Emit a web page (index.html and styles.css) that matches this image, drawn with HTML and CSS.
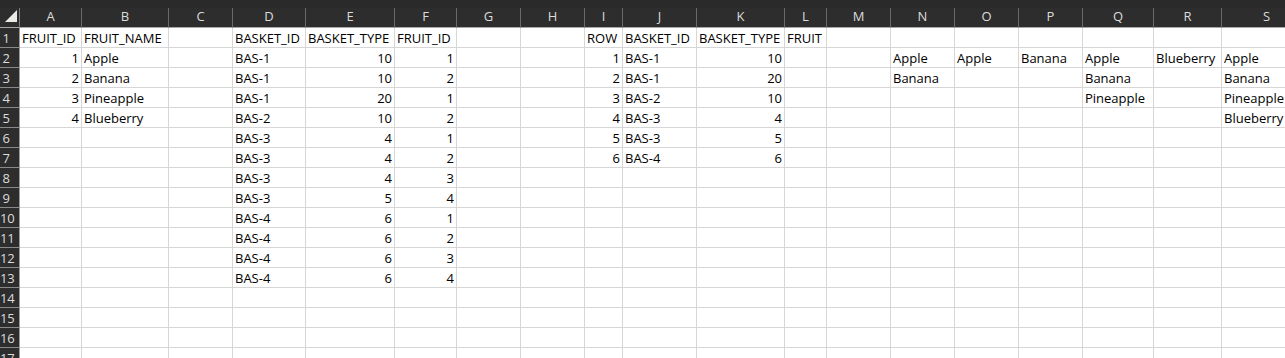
FILE: index.html
```html
<!DOCTYPE html>
<html lang="en">
<head>
<meta charset="utf-8">
<title>Sheet1</title>
<link rel="stylesheet" href="styles.css">
</head>
<body>
<div class="sheet">
  <div class="topstrip"></div>
  <div class="row colhead">
    <div class="corner"><svg width="20" height="19" viewBox="0 0 20 19"><polygon points="5,14 17,14 17,2" fill="#e9ece6"/></svg></div>
    <div class="ch">A</div><div class="ch">B</div><div class="ch">C</div><div class="ch">D</div><div class="ch">E</div><div class="ch">F</div><div class="ch">G</div><div class="ch">H</div><div class="ch">I</div><div class="ch">J</div><div class="ch">K</div><div class="ch">L</div><div class="ch">M</div><div class="ch">N</div><div class="ch">O</div><div class="ch">P</div><div class="ch">Q</div><div class="ch">R</div><div class="ch">S</div>
  </div>
  <div class="row">
    <div class="rh">1</div>
    <div class="c">FRUIT_ID</div><div class="c">FRUIT_NAME</div><div class="c"></div><div class="c">BASKET_ID</div><div class="c">BASKET_TYPE</div><div class="c">FRUIT_ID</div><div class="c"></div><div class="c"></div><div class="c">ROW</div><div class="c">BASKET_ID</div><div class="c">BASKET_TYPE</div><div class="c">FRUIT</div><div class="c"></div><div class="c"></div><div class="c"></div><div class="c"></div><div class="c"></div><div class="c"></div><div class="c"></div>
  </div>
  <div class="row">
    <div class="rh">2</div>
    <div class="c n">1</div><div class="c">Apple</div><div class="c"></div><div class="c">BAS-1</div><div class="c n">10</div><div class="c n">1</div><div class="c"></div><div class="c"></div><div class="c n">1</div><div class="c">BAS-1</div><div class="c n">10</div><div class="c"></div><div class="c"></div><div class="c">Apple</div><div class="c">Apple</div><div class="c">Banana</div><div class="c">Apple</div><div class="c">Blueberry</div><div class="c">Apple</div>
  </div>
  <div class="row">
    <div class="rh">3</div>
    <div class="c n">2</div><div class="c">Banana</div><div class="c"></div><div class="c">BAS-1</div><div class="c n">10</div><div class="c n">2</div><div class="c"></div><div class="c"></div><div class="c n">2</div><div class="c">BAS-1</div><div class="c n">20</div><div class="c"></div><div class="c"></div><div class="c">Banana</div><div class="c"></div><div class="c"></div><div class="c">Banana</div><div class="c"></div><div class="c">Banana</div>
  </div>
  <div class="row">
    <div class="rh">4</div>
    <div class="c n">3</div><div class="c">Pineapple</div><div class="c"></div><div class="c">BAS-1</div><div class="c n">20</div><div class="c n">1</div><div class="c"></div><div class="c"></div><div class="c n">3</div><div class="c">BAS-2</div><div class="c n">10</div><div class="c"></div><div class="c"></div><div class="c"></div><div class="c"></div><div class="c"></div><div class="c">Pineapple</div><div class="c"></div><div class="c">Pineapple</div>
  </div>
  <div class="row">
    <div class="rh">5</div>
    <div class="c n">4</div><div class="c">Blueberry</div><div class="c"></div><div class="c">BAS-2</div><div class="c n">10</div><div class="c n">2</div><div class="c"></div><div class="c"></div><div class="c n">4</div><div class="c">BAS-3</div><div class="c n">4</div><div class="c"></div><div class="c"></div><div class="c"></div><div class="c"></div><div class="c"></div><div class="c"></div><div class="c"></div><div class="c">Blueberry</div>
  </div>
  <div class="row">
    <div class="rh">6</div>
    <div class="c"></div><div class="c"></div><div class="c"></div><div class="c">BAS-3</div><div class="c n">4</div><div class="c n">1</div><div class="c"></div><div class="c"></div><div class="c n">5</div><div class="c">BAS-3</div><div class="c n">5</div><div class="c"></div><div class="c"></div><div class="c"></div><div class="c"></div><div class="c"></div><div class="c"></div><div class="c"></div><div class="c"></div>
  </div>
  <div class="row">
    <div class="rh">7</div>
    <div class="c"></div><div class="c"></div><div class="c"></div><div class="c">BAS-3</div><div class="c n">4</div><div class="c n">2</div><div class="c"></div><div class="c"></div><div class="c n">6</div><div class="c">BAS-4</div><div class="c n">6</div><div class="c"></div><div class="c"></div><div class="c"></div><div class="c"></div><div class="c"></div><div class="c"></div><div class="c"></div><div class="c"></div>
  </div>
  <div class="row">
    <div class="rh">8</div>
    <div class="c"></div><div class="c"></div><div class="c"></div><div class="c">BAS-3</div><div class="c n">4</div><div class="c n">3</div><div class="c"></div><div class="c"></div><div class="c"></div><div class="c"></div><div class="c"></div><div class="c"></div><div class="c"></div><div class="c"></div><div class="c"></div><div class="c"></div><div class="c"></div><div class="c"></div><div class="c"></div>
  </div>
  <div class="row">
    <div class="rh">9</div>
    <div class="c"></div><div class="c"></div><div class="c"></div><div class="c">BAS-3</div><div class="c n">5</div><div class="c n">4</div><div class="c"></div><div class="c"></div><div class="c"></div><div class="c"></div><div class="c"></div><div class="c"></div><div class="c"></div><div class="c"></div><div class="c"></div><div class="c"></div><div class="c"></div><div class="c"></div><div class="c"></div>
  </div>
  <div class="row">
    <div class="rh">10</div>
    <div class="c"></div><div class="c"></div><div class="c"></div><div class="c">BAS-4</div><div class="c n">6</div><div class="c n">1</div><div class="c"></div><div class="c"></div><div class="c"></div><div class="c"></div><div class="c"></div><div class="c"></div><div class="c"></div><div class="c"></div><div class="c"></div><div class="c"></div><div class="c"></div><div class="c"></div><div class="c"></div>
  </div>
  <div class="row">
    <div class="rh">11</div>
    <div class="c"></div><div class="c"></div><div class="c"></div><div class="c">BAS-4</div><div class="c n">6</div><div class="c n">2</div><div class="c"></div><div class="c"></div><div class="c"></div><div class="c"></div><div class="c"></div><div class="c"></div><div class="c"></div><div class="c"></div><div class="c"></div><div class="c"></div><div class="c"></div><div class="c"></div><div class="c"></div>
  </div>
  <div class="row">
    <div class="rh">12</div>
    <div class="c"></div><div class="c"></div><div class="c"></div><div class="c">BAS-4</div><div class="c n">6</div><div class="c n">3</div><div class="c"></div><div class="c"></div><div class="c"></div><div class="c"></div><div class="c"></div><div class="c"></div><div class="c"></div><div class="c"></div><div class="c"></div><div class="c"></div><div class="c"></div><div class="c"></div><div class="c"></div>
  </div>
  <div class="row">
    <div class="rh">13</div>
    <div class="c"></div><div class="c"></div><div class="c"></div><div class="c">BAS-4</div><div class="c n">6</div><div class="c n">4</div><div class="c"></div><div class="c"></div><div class="c"></div><div class="c"></div><div class="c"></div><div class="c"></div><div class="c"></div><div class="c"></div><div class="c"></div><div class="c"></div><div class="c"></div><div class="c"></div><div class="c"></div>
  </div>
  <div class="row">
    <div class="rh">14</div>
    <div class="c"></div><div class="c"></div><div class="c"></div><div class="c"></div><div class="c"></div><div class="c"></div><div class="c"></div><div class="c"></div><div class="c"></div><div class="c"></div><div class="c"></div><div class="c"></div><div class="c"></div><div class="c"></div><div class="c"></div><div class="c"></div><div class="c"></div><div class="c"></div><div class="c"></div>
  </div>
  <div class="row">
    <div class="rh">15</div>
    <div class="c"></div><div class="c"></div><div class="c"></div><div class="c"></div><div class="c"></div><div class="c"></div><div class="c"></div><div class="c"></div><div class="c"></div><div class="c"></div><div class="c"></div><div class="c"></div><div class="c"></div><div class="c"></div><div class="c"></div><div class="c"></div><div class="c"></div><div class="c"></div><div class="c"></div>
  </div>
  <div class="row">
    <div class="rh">16</div>
    <div class="c"></div><div class="c"></div><div class="c"></div><div class="c"></div><div class="c"></div><div class="c"></div><div class="c"></div><div class="c"></div><div class="c"></div><div class="c"></div><div class="c"></div><div class="c"></div><div class="c"></div><div class="c"></div><div class="c"></div><div class="c"></div><div class="c"></div><div class="c"></div><div class="c"></div>
  </div>
  <div class="row">
    <div class="rh">17</div>
    <div class="c"></div><div class="c"></div><div class="c"></div><div class="c"></div><div class="c"></div><div class="c"></div><div class="c"></div><div class="c"></div><div class="c"></div><div class="c"></div><div class="c"></div><div class="c"></div><div class="c"></div><div class="c"></div><div class="c"></div><div class="c"></div><div class="c"></div><div class="c"></div><div class="c"></div>
  </div>
</div>
</body>
</html>
```
FILE: styles.css
```css
html, body {
  margin: 0;
  padding: 0;
  background: #ffffff;
}
body {
  width: 1285px;
  height: 358px;
  overflow: hidden;
  font-family: "Open Sans", "Liberation Sans", sans-serif;
  font-size: 13px;
}
.sheet {
  width: 1285px;
  --cols: 20px 62px 87px 64px 73px 89px 62px 64px 64px 38px 74px 88px 42px 64px 64px 64px 64px 71px 68px 90px;
}
.topstrip {
  height: 8px;
  background: #2a2a2a;
}
.row {
  display: grid;
  grid-template-columns: var(--cols);
  width: 1310px;
}
.colhead {
  background: #2d2d2d;
}
.corner {
  height: 20px;
  box-sizing: border-box;
  border-right: 1px solid #7a7a7a;
  border-bottom: 1px solid #a8a8a8;
}
.corner svg {
  display: block;
}
.ch {
  height: 20px;
  box-sizing: border-box;
  border-right: 1px solid #6a6a6a;
  border-bottom: 1px solid #a8a8a8;
  color: #dcdcdc;
  text-align: center;
  line-height: 17px;
}
.rh {
  height: 20px;
  box-sizing: border-box;
  background: #2d2d2d;
  color: #dcdcdc;
  border-right: 1px solid #9a9a9a;
  border-bottom: 1px solid #8a8a8a;
  padding: 1px 7px 0 0;
  line-height: 18px;
  text-align: center;
  white-space: nowrap;
  letter-spacing: -0.3px;
}
.c {
  height: 20px;
  box-sizing: border-box;
  border-right: 1px solid #d6d6d6;
  border-bottom: 1px solid #d6d6d6;
  padding: 1px 2px 0 2px;
  line-height: 18px;
  color: #000000;
  white-space: nowrap;
  overflow: hidden;
}
.n {
  text-align: right;
}
```
